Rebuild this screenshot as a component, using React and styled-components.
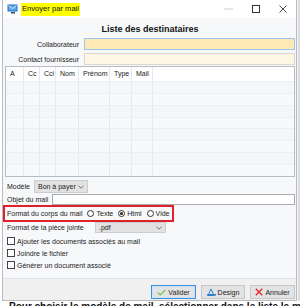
import { styled, createGlobalStyle } from 'styled-components'

const Global = createGlobalStyle`
    html, body { margin: 0; padding: 0; background: #fff; }
    body { font-family: "Liberation Sans", Arial, sans-serif; }
`;

const Page = styled.div`
    width: 300px;
    height: 306px;
    overflow: hidden;
    display: flex;
    flex-direction: column;
    background: #fff;
`;

const Desk = styled.div`
    display: flex;
    height: 301px;
    flex-shrink: 0;
    background: #fff;
`;

const Window = styled.div`
    margin-left: 2px;
    width: 293px;
    border: 1px solid #b8bcc2;
    border-top: none;
    display: flex;
    flex-direction: column;
    background: #f7f8fa;
`;

const OtherWin = styled.div`
    flex: 1;
    background: #dcdde0;
    border-left: 1px solid #f0f0f0;
`;

const TitleBar = styled.div`
    height: 18px;
    background: #fff;
    display: flex;
    align-items: center;
    padding-left: 4px;
    gap: 2px;
`;

const Title = styled.span`
    background: #ffff00;
    font-size: 7.6px;
    color: #111;
    padding: 2px 1px 3px 1px;
    line-height: 8px;
`;

const Controls = styled.div`
    margin-left: auto;
    display: flex;
    align-items: center;
    height: 18px;
`;

const Ctl = styled.div`
    width: 27px;
    height: 18px;
    display: flex;
    align-items: center;
    justify-content: center;
`;

const Body = styled.div`
    flex: 1;
    display: flex;
    flex-direction: column;
    padding: 0 1px 0 2px;
`;

const Heading = styled.div`
    height: 19px;
    display: flex;
    align-items: center;
    justify-content: center;
    font-weight: bold;
    font-size: 9px;
    color: #111;
    padding-top: 1px;
`;

const Row = styled.div`
    display: flex;
    align-items: center;
    height: ${p => p.$h || 12}px;
    margin-top: ${p => p.$mt || 0}px;
    font-size: 7px;
    color: #222;
`;

const Label = styled.div`
    width: ${p => p.$w ? p.$w + 'px' : 'auto'};
    text-align: ${p => p.$right ? 'right' : 'left'};
    padding: ${p => p.$right ? '0 5px 0 0' : '0 4px 0 2px'};
    white-space: nowrap;
    flex-shrink: 0;
    box-sizing: border-box;
`;

const Input = styled.div`
    flex: 1;
    align-self: stretch;
    background: ${p => p.$bg || '#fff'};
    border: 1px solid ${p => p.$border || '#a9adb3'};
`;

const Select = styled.div`
    width: ${p => p.$w}px;
    align-self: stretch;
    background: #e2e2e2;
    border: 1px solid #cdcdcd;
    box-sizing: border-box;
    display: flex;
    align-items: center;
    justify-content: space-between;
    padding: 0 3px;
    font-size: 7px;
    color: #222;
    white-space: nowrap;
`;

const Table = styled.div`
    margin-top: 1px;
    height: 109px;
    border: 1px solid #b6bcc4;
    background: #fff;
    display: flex;
    flex-direction: column;
    overflow: hidden;
`;

const Cols = 'grid-template-columns: 18px 16px 16px 23px 31px 22px 21px 1fr;';

const HeadRow = styled.div`
    display: grid;
    ${Cols}
    height: 14px;
    background: #fff;
    font-size: 7px;
    color: #222;
`;

const HeadCell = styled.div`
    display: flex;
    align-items: center;
    padding-left: 4px;
    border-right: 1px solid ${p => p.$last ? 'transparent' : '#e4e7eb'};
`;

const DataRow = styled.div`
    display: grid;
    ${Cols}
    height: 11px;
    background: ${p => p.$alt ? '#f4f6f9' : '#f8f9fb'};
    border-top: 1px solid #eceff3;
`;

const DataCell = styled.div`
    border-right: 1px solid ${p => p.$last ? 'transparent' : '#e6e9ee'};
`;

const FormatBox = styled.div`
    margin-left: -2px;
    width: 171px;
    height: 17px;
    box-sizing: border-box;
    border: 2px solid #e0202a;
    display: flex;
    align-items: center;
    padding-left: 2px;
    font-size: 7px;
    color: #222;
    gap: 5px;
    white-space: nowrap;
`;

const Radio = styled.span`
    display: inline-flex;
    align-items: center;
    gap: 2px;
    margin-left: ${p => p.$ml || 0}px;
`;

const Dot = styled.span`
    width: 7px;
    height: 7px;
    border-radius: 50%;
    border: 1px solid #333;
    box-sizing: border-box;
    background: #fff;
    display: inline-flex;
    align-items: center;
    justify-content: center;
    &::after {
        content: '';
        width: 3px;
        height: 3px;
        border-radius: 50%;
        background: ${p => p.$on ? '#222' : 'transparent'};
    }
`;

const Checks = styled.div`
    margin-top: 2px;
    display: flex;
    flex-direction: column;
`;

const Check = styled.div`
    height: 12px;
    display: flex;
    align-items: center;
    gap: 2px;
    padding-left: 2px;
    font-size: 7px;
    color: #222;
    white-space: nowrap;
`;

const Box = styled.span`
    width: 8px;
    height: 8px;
    border: 1px solid #444;
    box-sizing: border-box;
    background: #fff;
`;

const Footer = styled.div`
    height: 20px;
    border-top: 1px solid #e2e3e5;
    background: #f0f0f0;
    display: flex;
    align-items: flex-end;
    justify-content: flex-end;
    gap: 5px;
    padding: 0 1px 1px 0;
`;

const Button = styled.div`
    height: 14px;
    width: ${p => p.$w}px;
    box-sizing: border-box;
    border: 1px solid ${p => p.$default ? '#3d8ee0' : '#c7c7c7'};
    box-shadow: ${p => p.$default ? 'inset 0 0 0 1px #cfe3f7' : 'none'};
    background: #e3e3e3;
    display: flex;
    align-items: center;
    justify-content: center;
    gap: 2px;
    font-size: 7px;
    color: #222;
`;

const DocText = styled.div`
    height: 5px;
    overflow: hidden;
    padding-left: 9px;
    font-size: 10px;
    font-weight: bold;
    line-height: 11px;
    color: #111;
    white-space: nowrap;
`;

const Chevron = () => (
    <svg width="6" height="4" viewBox="0 0 6 4"><path d="M0.5 0.8 L3 3.2 L5.5 0.8" stroke="#555" strokeWidth="0.8" fill="none" /></svg>
);

const columns = ['A', 'Cc', 'Cci', 'Nom', 'Prénom', 'Type', 'Mail', ''];

export default function App() {
    const rows = Array.from({ length: 8 }, (_, i) => i);
    return (
        <Page>
            <Global />
            <Desk>
                <Window>
                    <TitleBar>
                        <svg width="12" height="10" viewBox="0 0 12 10">
                            <rect x="0.5" y="0.5" width="10" height="7" fill="#1f6fc4" />
                            <rect x="1.5" y="1.5" width="8" height="5" fill="#5aa6e8" />
                            <path d="M1.5 1.5 L5.5 4.5 L9.5 1.5" stroke="#fff" strokeWidth="0.8" fill="none" />
                            <rect x="4" y="8" width="4" height="1.5" fill="#3c4b5c" />
                        </svg>
                        <Title>Envoyer par mail</Title>
                        <Controls>
                            <Ctl>
                                <svg width="9" height="2" viewBox="0 0 9 2"><rect x="0" y="0.5" width="9" height="1" fill="#d0d0d0" /></svg>
                            </Ctl>
                            <Ctl>
                                <svg width="8" height="8" viewBox="0 0 8 8"><rect x="0.5" y="0.5" width="7" height="7" fill="none" stroke="#333" strokeWidth="1" /></svg>
                            </Ctl>
                            <Ctl>
                                <svg width="8" height="8" viewBox="0 0 8 8"><path d="M0.5 0.5 L7.5 7.5 M7.5 0.5 L0.5 7.5" stroke="#333" strokeWidth="0.9" /></svg>
                            </Ctl>
                        </Controls>
                    </TitleBar>
                    <Body>
                        <Heading>Liste des destinataires</Heading>
                        <Row $h={12}>
                            <Label $w={79} $right>Collaborateur</Label>
                            <Input $bg="#fde9b3" $border="#9cc5ea" />
                        </Row>
                        <Row $h={12} $mt={3}>
                            <Label $w={79} $right>Contact fournisseur</Label>
                            <Input $bg="#fdf6e5" $border="#dcd7cc" />
                        </Row>
                        <Table>
                            <HeadRow>
                                {columns.map((c, i) => (
                                    <HeadCell key={i} $last={i === columns.length - 1}>{c}</HeadCell>
                                ))}
                            </HeadRow>
                            {rows.map(r => (
                                <DataRow key={r} $alt={r % 2 === 0}>
                                    {columns.map((c, i) => (
                                        <DataCell key={i} $last={i === columns.length - 1} />
                                    ))}
                                </DataRow>
                            ))}
                        </Table>
                        <Row $h={13} $mt={3}>
                            <Label>Modèle</Label>
                            <Select $w={54}>Bon à payer <Chevron /></Select>
                        </Row>
                        <Row $h={11} $mt={1}>
                            <Label>Objet du mail</Label>
                            <Input $bg="#fff" $border="#a9adb3" />
                        </Row>
                        <FormatBox>
                            <span>Format du corps du mail</span>
                            <Radio><Dot />Texte</Radio>
                            <Radio><Dot $on />Html</Radio>
                            <Radio><Dot />Vide</Radio>
                        </FormatBox>
                        <Row $h={11}>
                            <Label $w={90}>Format de la pièce jointe</Label>
                            <Select $w={71}>.pdf <Chevron /></Select>
                        </Row>
                        <Checks>
                            <Check><Box />Ajouter les documents associés au mail</Check>
                            <Check><Box />Joindre le fichier</Check>
                            <Check><Box />Générer un document associé</Check>
                        </Checks>
                    </Body>
                    <Footer>
                        <Button $w={45} $default>
                            <svg width="9" height="7" viewBox="0 0 9 7"><path d="M0.8 3.6 L3.3 6 L8.3 0.8" stroke="#6cc04a" strokeWidth="1.2" fill="none" /></svg>
                            Valider
                        </Button>
                        <Button $w={44}>
                            <svg width="9" height="8" viewBox="0 0 9 8">
                                <path d="M1 7.5 L4 1 L7 7.5 Z" fill="none" stroke="#2f7fd0" strokeWidth="1" />
                                <rect x="0" y="6" width="9" height="1.6" fill="#2f7fd0" />
                            </svg>
                            Design
                        </Button>
                        <Button $w={45}>
                            <svg width="8" height="8" viewBox="0 0 8 8"><path d="M0.8 0.8 L7.2 7.2 M7.2 0.8 L0.8 7.2" stroke="#e0262c" strokeWidth="1.3" /></svg>
                            Annuler
                        </Button>
                    </Footer>
                </Window>
                <OtherWin />
            </Desk>
            <DocText>Pour choisir le modèle de mail, sélectionner dans la liste le modèle voulu.</DocText>
        </Page>
    );
}
